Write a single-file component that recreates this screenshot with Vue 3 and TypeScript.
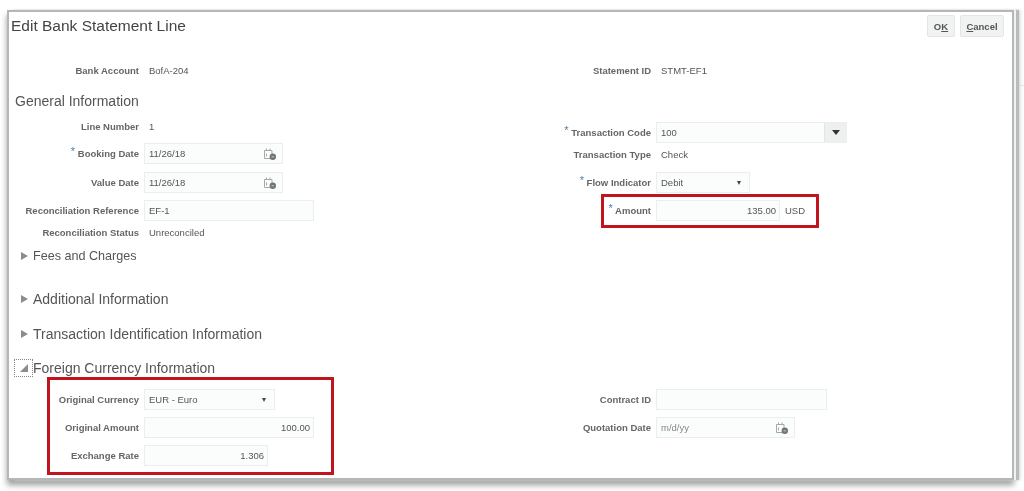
<script setup lang="ts">
</script>

<template>
  <div class="page">
    <div class="panel">
      <header class="head">
        <h1>Edit Bank Statement Line</h1>
        <div class="actions">
          <button class="btn ok">O<u>K</u></button>
          <button class="btn cancel"><u>C</u>ancel</button>
        </div>
      </header>
      <div class="cols">
        <section class="col left">
          <div class="row bank"><label>Bank Account</label><span class="val">BofA-204</span></div>
          <h2 class="general">General Information</h2>
          <div class="row line"><label>Line Number</label><span class="val">1</span></div>
          <div class="row booking">
            <label><i>*</i> Booking Date</label>
            <div class="field w139"><span>11/26/18</span>
              <svg class="cal" viewBox="0 0 14 14"><path d="M1.5 3.5h7.5v8h-7.5zM3.5 1.5v2.5M7 1.5v2.5M3.5 6.5v3" fill="none" stroke="#a3a8a8"/><circle cx="9.8" cy="9.8" r="3.2" fill="#6f7678"/><path d="M8.6 9.8h2.4" stroke="#c8cccc"/></svg>
            </div>
          </div>
          <div class="row value">
            <label>Value Date</label>
            <div class="field w139"><span>11/26/18</span>
              <svg class="cal" viewBox="0 0 14 14"><path d="M1.5 3.5h7.5v8h-7.5zM3.5 1.5v2.5M7 1.5v2.5M3.5 6.5v3" fill="none" stroke="#a3a8a8"/><circle cx="9.8" cy="9.8" r="3.2" fill="#6f7678"/><path d="M8.6 9.8h2.4" stroke="#c8cccc"/></svg>
            </div>
          </div>
          <div class="row recon"><label>Reconciliation Reference</label><div class="field w170"><span>EF-1</span></div></div>
          <div class="row status"><label>Reconciliation Status</label><span class="val">Unreconciled</span></div>
          <h2 class="disc fees"><b class="tri"></b>Fees and Charges</h2>
          <h2 class="disc addl"><b class="tri"></b>Additional Information</h2>
          <h2 class="disc trans"><b class="tri"></b>Transaction Identification Information</h2>
          <h2 class="disc foreign"><span class="focus"><b class="tri open"></b></span>Foreign Currency Information</h2>
          <div class="hl hl-left">
            <div class="row"><label>Original Currency</label>
              <div class="field w131 sel"><span>EUR - Euro</span><b class="caret"></b></div>
            </div>
            <div class="row amt"><label>Original Amount</label><div class="field w170 num"><span>100.00</span></div></div>
            <div class="row rate"><label>Exchange Rate</label><div class="field w124 num"><span>1.306</span></div></div>
          </div>
        </section>
        <section class="col right">
          <div class="row bank"><label>Statement ID</label><span class="val">STMT-EF1</span></div>
          <div class="row code">
            <label><i>*</i> Transaction Code</label>
            <div class="field w191 combo"><span>100</span><span class="drop"><b class="caret dark"></b></span></div>
          </div>
          <div class="row type"><label>Transaction Type</label><span class="val">Check</span></div>
          <div class="row flow">
            <label><i>*</i> Flow Indicator</label>
            <div class="field w94 sel"><span>Debit</span><b class="caret"></b></div>
          </div>
          <div class="hl hl-right">
            <div class="row">
              <label><i>*</i> Amount</label>
              <div class="field w124 num"><span>135.00</span></div><span class="val usd">USD</span>
            </div>
          </div>
          <div class="row contract"><label>Contract ID</label><div class="field w171"></div></div>
          <div class="row quote">
            <label>Quotation Date</label>
            <div class="field w139 ph"><span>m/d/yy</span>
              <svg class="cal" viewBox="0 0 14 14"><path d="M1.5 3.5h7.5v8h-7.5zM3.5 1.5v2.5M7 1.5v2.5M3.5 6.5v3" fill="none" stroke="#a3a8a8"/><circle cx="9.8" cy="9.8" r="3.2" fill="#6f7678"/><path d="M8.6 9.8h2.4" stroke="#c8cccc"/></svg>
            </div>
          </div>
        </section>
      </div>
    </div>
    <div class="behind"></div>
  </div>
</template>

<style>
html, body { margin: 0; background: #fff; }
</style>

<style scoped>
.page {
  width: 1024px;
  height: 491px;
  overflow: hidden;
  background: #fff;
  position: relative;
  box-sizing: border-box;
  padding: 10px 0 0 7px;
  font-family: "Liberation Sans", Arial, sans-serif;
  color: #555;
}
.panel {
  width: 1007px;
  height: 470px;
  box-sizing: border-box;
  background: #fff;
  border: 2px solid #b4b7b7;
  box-shadow: 2px 0 0 #f2f2f2, 5px 0 1px #b9bcbc, 7px 0 3px #e4e4e4, 0 5px 6px #9a9c9c;
  filter: blur(0.45px);
}
.head {
  display: flex;
  justify-content: space-between;
  height: 44px;
}
h1 {
  margin: 5px 0 0 2px;
  font-size: 15.5px;
  line-height: 18px;
  font-weight: 400;
  color: #444;
}
.actions { display: flex; gap: 5px; margin: 3px 8px 0 0; }
.btn {
  height: 22px;
  box-sizing: border-box;
  background: #f1f3f3;
  border: 1px solid #e3e6e6;
  border-radius: 2px;
  font: 700 9.5px "Liberation Sans", Arial, sans-serif;
  color: #555;
}
.ok { width: 28px; padding: 0; }
.cancel { width: 44px; padding: 0; }
.cols { display: flex; }
.col { display: flex; flex-direction: column; }
.left { width: 512px; --lw: 130px; }
.right { --lw: 130px; width: 340px; }
.row {
  display: flex;
  align-items: center;
  height: 21px;
  font-size: 9.5px;
}
label {
  width: var(--lw);
  flex: none;
  text-align: right;
  font-weight: 700;
  color: #666;
  white-space: nowrap;
}
label i {
  font-style: normal;
  color: #4a7fa8;
  font-size: 11px;
  line-height: 0;
  vertical-align: 2px;
  font-weight: 400;
}
.val { margin-left: 10px; color: #555; }
.field {
  margin-left: 5px;
  height: 21px;
  flex: none;
  box-sizing: border-box;
  border: 1px solid #ebeeee;
  background: #fbfcfc;
  padding: 0 4px;
  display: flex;
  align-items: center;
  justify-content: space-between;
  color: #555;
}
.num { justify-content: flex-end; padding-right: 3px; }
.ph span { color: #888; }
.w94 { width: 94px; }
.w124 { width: 124px; }
.w131 { width: 131px; }
.w139 { width: 139px; }
.w170 { width: 170px; }
.w171 { width: 171px; }
.w191 { width: 191px; }
.cal { width: 14px; height: 14px; margin-right: 1px; flex: none; }
.caret {
  width: 0; height: 0;
  border-left: 2.5px solid transparent;
  border-right: 2.5px solid transparent;
  border-top: 4px solid #444;
  margin-right: 4px;
}
.combo { padding-right: 0; }
.drop {
  width: 21px;
  height: 19px;
  display: flex;
  align-items: center;
  justify-content: center;
  background: #eef0f0;
  border-left: 1px solid #e3e6e6;
}
.caret.dark {
  margin: 0;
  border-left-width: 4px;
  border-right-width: 4px;
  border-top-width: 5px;
  border-top-color: #333;
}
h2 {
  margin: 0;
  font-size: 14px;
  font-weight: 400;
  line-height: 16px;
  color: #555;
}
.bank { margin-top: 4px; }
.general { margin: 12px 0 0 6px; }
.line { margin-top: 7px; }
.booking { margin-top: 6px; }
.value { margin-top: 8px; }
.recon { margin-top: 7px; }
.status { margin-top: 1px; }
.disc { display: flex; align-items: center; margin-left: 12px; }
.tri {
  width: 0; height: 0;
  margin-right: 5px;
  border-top: 4.5px solid transparent;
  border-bottom: 4.5px solid transparent;
  border-left: 7px solid #8a8d8d;
}
.tri.open {
  border: 0;
  border-bottom: 8px solid #8a8d8d;
  border-left: 8px solid transparent;
  margin-right: 0;
}
.fees { margin-top: 5px; font-size: 12.6px; }
.addl { margin-top: 27px; }
.trans { margin-top: 19px; }
.foreign { margin-top: 17px; margin-left: 5px; }
.focus {
  width: 19px;
  height: 18px;
  display: flex;
  align-items: center;
  justify-content: center;
  border: 1px dotted #888;
  box-sizing: border-box;
}
.hl { position: relative; }
.hl::after {
  content: "";
  position: absolute;
  border: 3px solid #c1141e;
  pointer-events: none;
}
.hl-left { margin-top: 12px; }
.hl-left::after { left: 38px; right: 187px; top: -12px; bottom: -9px; }
.amt { margin-top: 7px; }
.rate { margin-top: 7px; }
.code { margin-top: 41px; }
.type { margin-top: 1px; }
.flow { margin-top: 7px; }
.hl-right { margin-top: 7px; }
.hl-right::after { left: 80px; top: -6px; bottom: -7px; width: 212px; }
.usd { margin-left: 5px; }
.contract { margin-top: 168px; }
.quote { margin-top: 7px; }
.behind {
  position: absolute;
  right: 0;
  top: 85px;
  width: 4px;
  height: 1px;
  background: #e2e2e2;
}
</style>
